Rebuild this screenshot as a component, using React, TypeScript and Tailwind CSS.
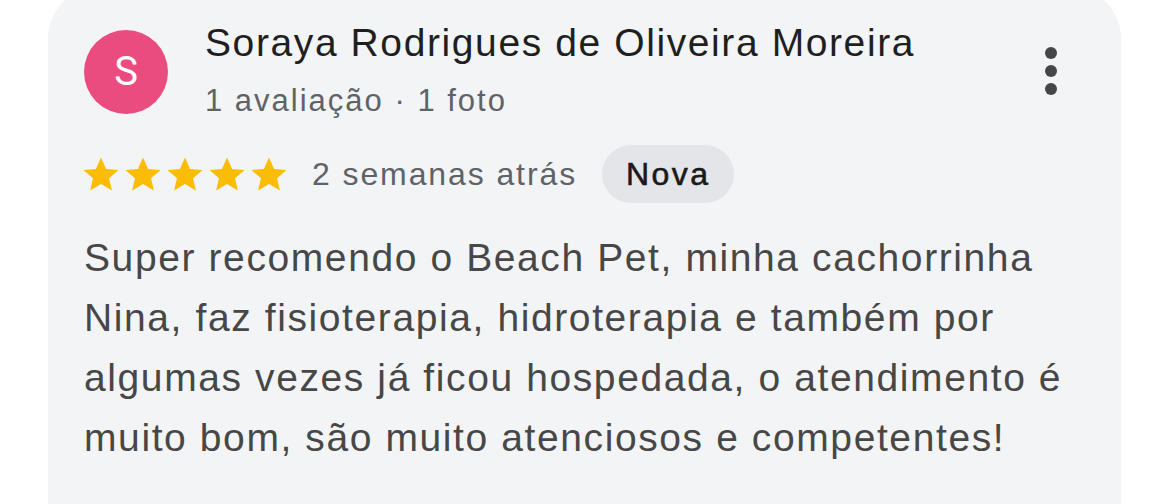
export default function App() {
  return (
    <div className="w-[1170px] h-[504px] overflow-hidden bg-white font-['Liberation_Sans',sans-serif]">
      <div className="ml-[48px] mt-[-12px] w-[1073px] h-[540px] rounded-t-[50px] bg-[#f3f4f6] pl-[36px] pr-[60px] pt-[42px]">
        <div className="flex items-start">
          <div className="w-[84px] h-[84px] rounded-full bg-[#ea4c7f] flex items-center justify-center text-white text-[40px] font-['Roboto',sans-serif] shrink-0">
            S
          </div>
          <div className="ml-[37px] mt-[-9px] flex-1">
            <div className="text-[39px] leading-[44px] tracking-[1.6px] text-[#1f1f1f]">Soraya Rodrigues de Oliveira Moreira</div>
            <div className="text-[31px] leading-[36px] tracking-[2px] mt-[18px] text-[#5f6368]">1 avaliação · 1 foto</div>
          </div>
          <div className="flex flex-col gap-[6px] mt-[17px] mr-[4px]">
            <span className="w-[12px] h-[12px] rounded-full bg-[#444746]" />
            <span className="w-[12px] h-[12px] rounded-full bg-[#444746]" />
            <span className="w-[12px] h-[12px] rounded-full bg-[#444746]" />
          </div>
        </div>
        <div className="flex items-center mt-[26px]">
          <div className="flex -ml-[4px]">
            {[0, 1, 2, 3, 4].map((i) => (
              <svg key={i} width="42" height="42" viewBox="0 0 24 24">
                <path fill="#fbbc04" d="M12 2.5l2.9 6.6 7.1.6-5.4 4.7 1.6 7-6.2-3.7-6.2 3.7 1.6-7L2 9.7l7.1-.6z" />
              </svg>
            ))}
          </div>
          <div className="ml-[22px] text-[32px] tracking-[1.9px] text-[#5f6368]">2 semanas atrás</div>
          <div className="ml-[25px] h-[58px] px-[24px] rounded-full bg-[#e3e5e8] flex items-center text-[32px] tracking-[2.4px] text-[#1a1a1a] [-webkit-text-stroke:0.6px_#1a1a1a]">
            Nova
          </div>
        </div>
        <p className="mt-[25px] text-[39px] leading-[60px] tracking-[1.6px] whitespace-nowrap text-[#474747]">
          Super recomendo o Beach Pet, minha cachorrinha
          <br />
          Nina, faz fisioterapia, hidroterapia e também por
          <br />
          algumas vezes já ficou hospedada, o atendimento é
          <br />
          muito bom, são muito atenciosos e competentes!
        </p>
      </div>
    </div>
  )
}
